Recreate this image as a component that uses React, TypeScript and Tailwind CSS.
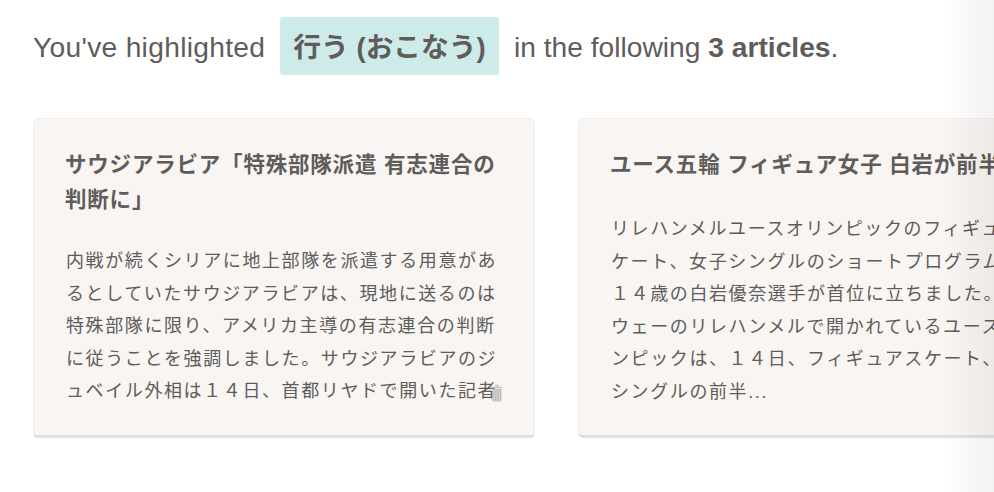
import React from 'react';

const FONT = "font-['Liberation_Sans','Noto_Sans_CJK_JP',sans-serif]";

const articles = [
  {
    title: ['サウジアラビア「特殊部隊派遣 有志連合の', '判断に」'],
    lines: [
      '内戦が続くシリアに地上部隊を派遣する用意があ',
      'るとしていたサウジアラビアは、現地に送るのは',
      '特殊部隊に限り、アメリカ主導の有志連合の判断',
      'に従うことを強調しました。サウジアラビアのジ',
      'ュベイル外相は１４日、首都リヤドで開いた記者',
    ],
    bodyGap: 'mt-[27px]',
    trash: true,
  },
  {
    title: ['ユース五輪 フィギュア女子 白岩が前半首位'],
    lines: [
      'リレハンメルユースオリンピックのフィギュア',
      'ケート、女子シングルのショートプログラムで',
      '１４歳の白岩優奈選手が首位に立ちました。ノル',
      'ウェーのリレハンメルで開かれているユースオリ',
      'ンピックは、１４日、フィギュアスケート、女子',
      'シングルの前半...',
    ],
    bodyGap: 'mt-[30px]',
    trash: false,
  },
];

function TrashIcon() {
  return (
    <svg width="12" height="18" viewBox="0 0 12 18" className="absolute left-[457px] top-[265px]">
      <path d="M4 1.5h4M1 3.5h10" stroke="#c4c1be" strokeWidth="1.4" fill="none" />
      <path d="M1.5 5h9v12.5h-9z" fill="#c2bfbc" />
      <path d="M3.5 6v10.5M6 6v10.5M8.5 6v10.5" stroke="#dedbd8" strokeWidth="0.7" />
    </svg>
  );
}

export default function App() {
  return (
    <div className={`relative w-[994px] h-[492px] overflow-hidden bg-white text-[#5f5c5a] ${FONT}`}>
      {/* Heading */}
      <div className="flex items-center h-[58px] mt-[17px] ml-[33px] text-[28.2px] whitespace-nowrap">
        <span className="w-[231px] pt-[2px] tracking-[0.3px]">You've highlighted</span>
        <span className="ml-[16px] flex items-center justify-center w-[219px] h-[58px] pt-[3px] bg-[#cdebe8] rounded-[3px] font-bold text-[27.7px]">行う (おこなう)</span>
        <span className="ml-[15px] pt-[2px]">in the following <b>3 articles</b>.</span>
      </div>

      {/* Cards */}
      <div className="flex gap-[43px] mt-[43px] ml-[33px]">
        {articles.map((a) => (
          <div
            key={a.title[0]}
            className="relative shrink-0 w-[502px] h-[320px] box-border pt-[29px] pl-[31px] bg-[#f8f5f3] border border-[#f1eeec] border-b-[3px] border-b-[#e3dfdc] rounded-[5px] whitespace-nowrap"
          >
            <h2 className="text-[21.5px] leading-[35px] font-bold tracking-[0.8px]">
              {a.title.map((t) => (
                <div key={t}>{t}</div>
              ))}
            </h2>
            <div className={`${a.bodyGap} ml-[1px] text-[18px] leading-[32.6px] tracking-[1.6px]`}>
              {a.lines.map((l) => (
                <div key={l}>{l}</div>
              ))}
            </div>
            {a.trash && <TrashIcon />}
          </div>
        ))}
      </div>

      {/* Fade at the right edge */}
      <div className="absolute top-0 right-0 w-[50px] h-full bg-gradient-to-r from-[#00000000] to-[#0000000d]" />
    </div>
  );
}
